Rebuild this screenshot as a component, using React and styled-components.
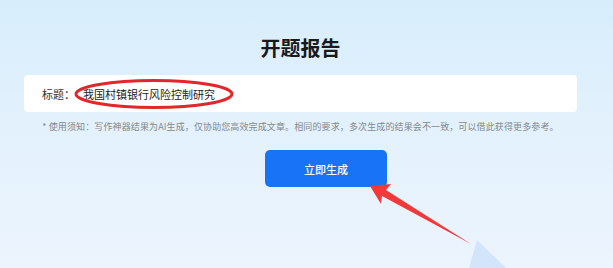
import React from 'react';
import styled, { createGlobalStyle } from 'styled-components';

const GlobalStyle = createGlobalStyle`
  html, body {
    margin: 0;
    padding: 0;
  }
  body {
    font-family: "Microsoft YaHei", "Noto Sans CJK SC", "Noto Sans", sans-serif;
  }
`;

const Page = styled.div`
  position: relative;
  width: 613px;
  height: 268px;
  overflow: hidden;
  background: linear-gradient(180deg, #d7edfb 0%, #e2f1fc 45%, #ecf4fd 100%);
`;

const Column = styled.div`
  width: 553px;
  margin-left: 24px;
  padding-top: 34px;
  display: flex;
  flex-direction: column;
`;

const Title = styled.h1`
  margin: 0;
  font-size: 20px;
  line-height: 28px;
  font-weight: 700;
  color: #1a1a1a;
  text-align: center;
`;

const Card = styled.div`
  position: relative;
  margin-top: 13px;
  height: 37px;
  background: #fff;
  border-radius: 4px;
  display: flex;
  align-items: center;
  padding-left: 18px;
  box-sizing: border-box;
`;

const Label = styled.label`
  font-size: 11px;
  color: #333;
  white-space: nowrap;
`;

const Field = styled.input`
  flex: 1;
  border: none;
  outline: none;
  background: transparent;
  font-family: inherit;
  font-size: 11px;
  color: #222;
  padding: 0 0 0 8px;
  height: 100%;
`;

const Circle = styled.svg`
  position: absolute;
  left: 50px;
  top: 3px;
  overflow: visible;
  pointer-events: none;
`;

const Notice = styled.p`
  margin: 8px 0 0;
  font-size: 9px;
  line-height: 14px;
  letter-spacing: 0.12px;
  color: #85898e;
  text-align: center;
  white-space: nowrap;
`;

const Button = styled.button`
  margin: 16px 0 0 241px;
  width: 122px;
  height: 37px;
  border: none;
  border-radius: 5px;
  background: #1873f6;
  color: #fff;
  font-family: inherit;
  font-size: 11px;
  font-weight: 500;
  cursor: pointer;
`;

const Overlay = styled.svg`
  position: absolute;
  left: 0;
  top: 0;
  pointer-events: none;
`;

export default function App() {
  return (
    <>
      <GlobalStyle />
      <Page>
        <Column>
          <Title>开题报告</Title>
          <Card>
            <Label>标题：</Label>
            <Field readOnly value="我国村镇银行风险控制研究" />
            <Circle width="160" height="32">
              <ellipse cx="80" cy="16" rx="78" ry="13.5" fill="none" stroke="#e3262b" strokeWidth="3" />
            </Circle>
          </Card>
          <Notice>
            * 使用须知：写作神器结果为AI生成，仅协助您高效完成文章。相同的要求，多次生成的结果会不一致，可以借此获得更多参考。
          </Notice>
          <Button>立即生成</Button>
        </Column>
        <Overlay width="613" height="268">
          <polygon points="477,240 469,268 506,268" fill="#d3e5fb" />
          <polygon
            points="370,186 391,184 386,190 471,244 382,196 381,204"
            fill="#f03a3a"
          />
        </Overlay>
      </Page>
    </>
  );
}
